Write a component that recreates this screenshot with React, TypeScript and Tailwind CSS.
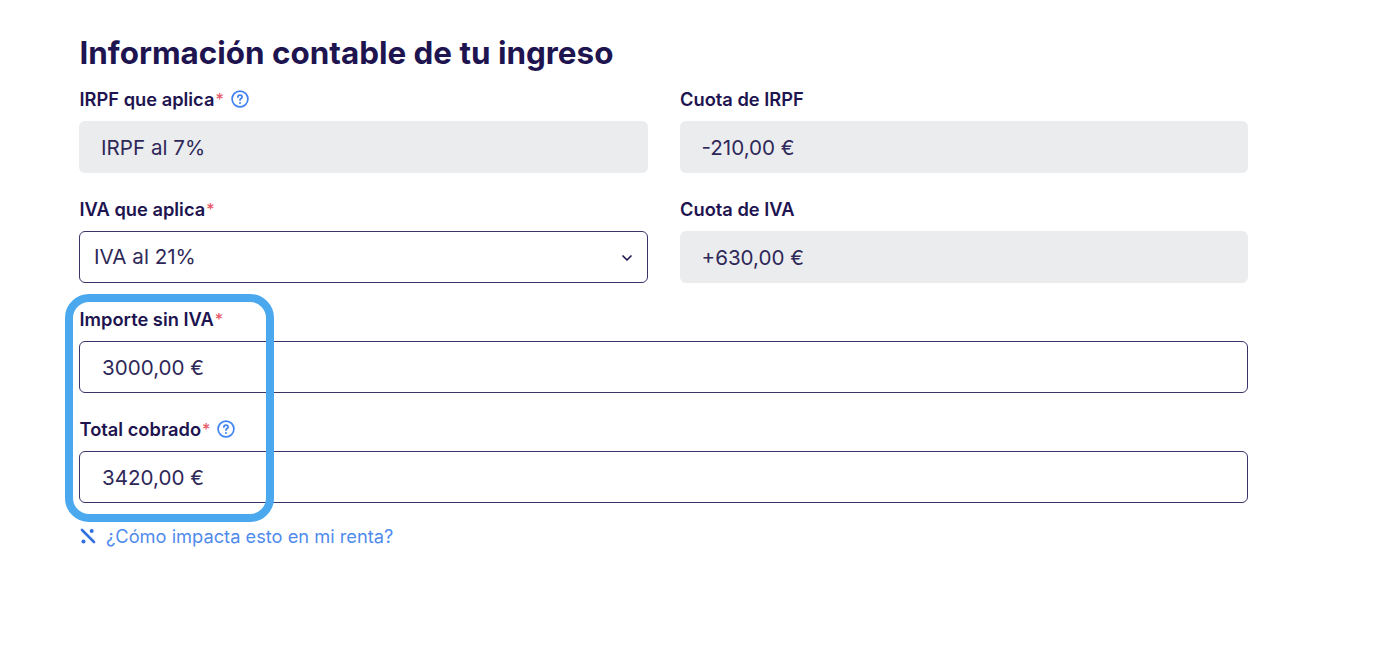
import { ChevronDown } from 'lucide-react';

const font = { fontFamily: 'Inter, sans-serif' };

function HelpIcon() {
  return (
    <svg width="18" height="18" viewBox="0 0 18 18" fill="none" className="ml-[7px] shrink-0">
      <circle cx="9" cy="9" r="7.9" stroke="#3f82f0" strokeWidth="1.7" />
      <path
        d="M6.9 7.1c0-1.2.95-1.95 2.1-1.95s2.1.75 2.1 1.85c0 1.5-2.1 1.6-2.1 3.1"
        stroke="#3f82f0"
        strokeWidth="1.7"
        strokeLinecap="round"
      />
      <circle cx="9" cy="12.9" r="1" fill="#3f82f0" />
    </svg>
  );
}

function Label({ text, required, help }: { text: string; required?: boolean; help?: boolean }) {
  return (
    <div className="flex h-[22px] items-center pl-[0.5px] text-[18.3px] leading-[22px] font-semibold text-[#1e1450]">
      <span>{text}</span>
      {required && <span className="ml-px text-[16px] font-medium text-[#e8596a]">*</span>}
      {help && <HelpIcon />}
    </div>
  );
}

function ReadOnly({ label, value, required, help }: { label: string; value: string; required?: boolean; help?: boolean }) {
  return (
    <div className="flex flex-col gap-[11px]">
      <Label text={label} required={required} help={help} />
      <div className="flex h-[52px] items-center rounded-md bg-[#ebecee] px-[22px] pt-[3px] text-[20.6px] text-[#2e2858]">
        {value}
      </div>
    </div>
  );
}

function Editable({ label, value, help }: { label: string; value: string; help?: boolean }) {
  return (
    <div className="flex flex-col gap-[11px]">
      <Label text={label} required help={help} />
      <div className="flex h-[52px] items-center rounded-md border border-[#3a3468] bg-white px-[22px] pt-[3px] text-[20.6px] text-[#2e2858]">
        {value}
      </div>
    </div>
  );
}

export default function App() {
  return (
    <div className="relative h-[672px] w-[1382px] overflow-hidden bg-white" style={font}>
      <div className="ml-[79px] w-[1169px] pt-[33px]">
        <h1 className="pl-[0.5px] text-[31.4px] leading-[40px] font-bold text-[#1e1450]">Información contable de tu ingreso</h1>

        <div className="mt-[15px] grid grid-cols-2 gap-x-[32px] gap-y-[25px]">
          <ReadOnly label="IRPF que aplica" value="IRPF al 7%" required help />
          <ReadOnly label="Cuota de IRPF" value="-210,00 €" />
          <div className="flex flex-col gap-[11px]">
            <Label text="IVA que aplica" required />
            <div className="flex h-[52px] items-center justify-between rounded-md border border-[#3a3468] bg-white pt-px pr-[12px] pl-[14px] text-[20.6px] text-[#2e2858]">
              <span>IVA al 21%</span>
              <ChevronDown size={16} strokeWidth={2.5} className="text-[#1e1450]" />
            </div>
          </div>
          <ReadOnly label="Cuota de IVA" value="+630,00 €" />
        </div>

        <div className="mt-[25px] flex flex-col gap-[25px]">
          <Editable label="Importe sin IVA" value="3000,00 €" />
          <Editable label="Total cobrado" value="3420,00 €" help />
        </div>

        <div className="mt-[22px] flex items-center pl-px text-[18.25px] leading-[22px] text-[#4f8bec]">
          <svg width="16" height="16" viewBox="0 0 16 16" className="mr-[10px] shrink-0">
            <path d="M2 2 L14 14" stroke="#2f6fe0" strokeWidth="2.6" strokeLinecap="round" />
            <circle cx="11.7" cy="3" r="2" fill="#2f6fe0" />
            <circle cx="3.5" cy="13.6" r="2" fill="#2f6fe0" />
          </svg>
          ¿Cómo impacta esto en mi renta?
        </div>
      </div>

      <div className="pointer-events-none absolute top-[294px] left-[65px] h-[228px] w-[209px] rounded-[24px] border-[8px] border-[#4aa8ee]" />
    </div>
  );
}
